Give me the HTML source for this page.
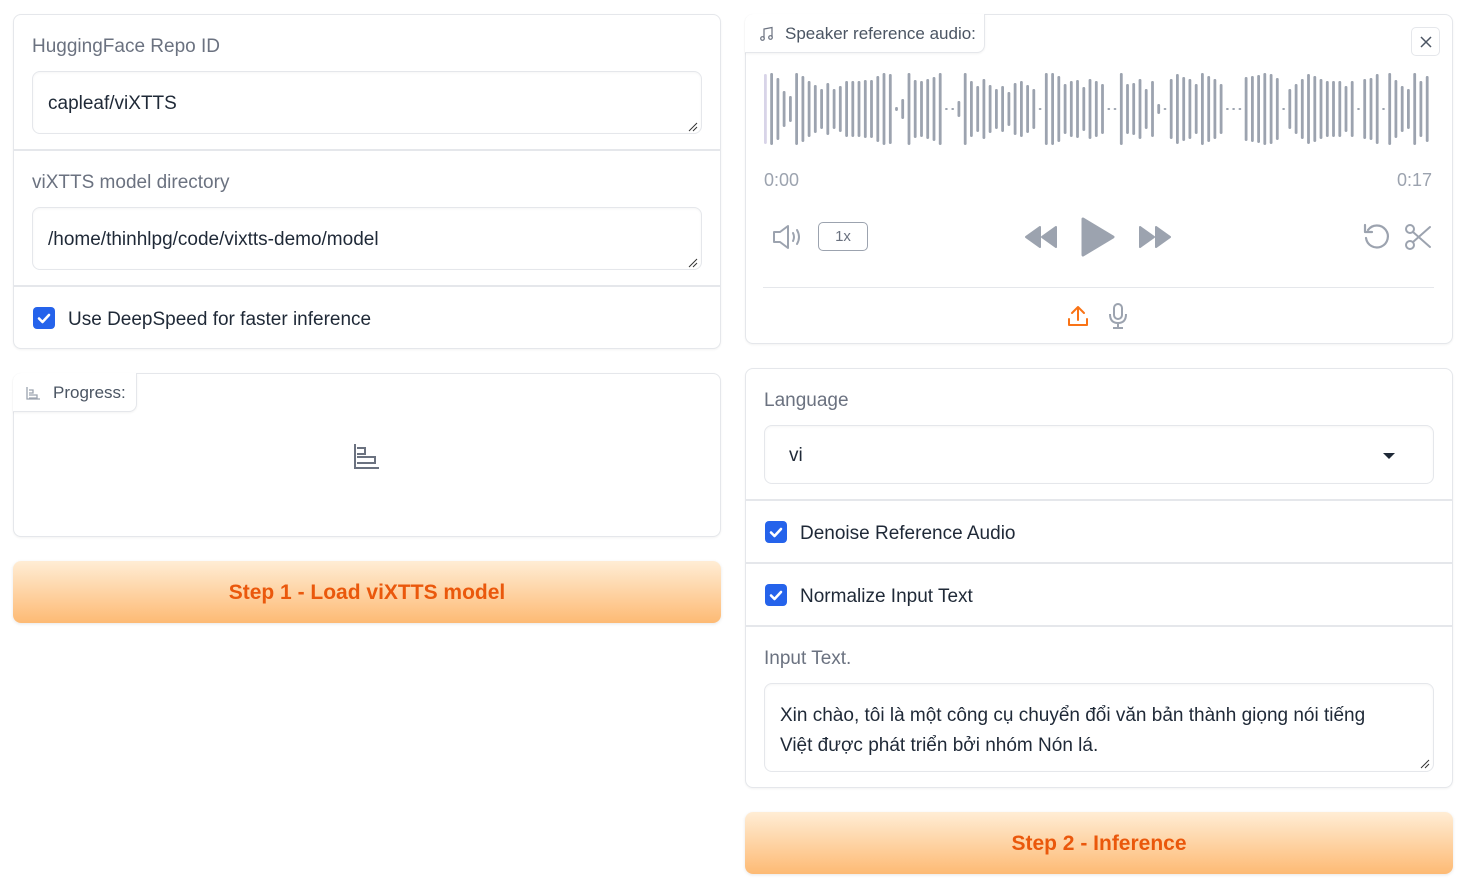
<!DOCTYPE html>
<html><head><meta charset="utf-8"><style>
*{box-sizing:border-box;margin:0;padding:0}
body{width:1467px;height:882px;background:#fff;font-family:"Liberation Sans",sans-serif;position:relative;overflow:hidden;color:#1f2937}
.abs{position:absolute}
.panel{position:absolute;border:1px solid #e5e7eb;border-radius:8px;background:#fff;box-shadow:0 1px 2px rgba(0,0,0,.05)}
.lbl{position:absolute;font-size:19px;color:#6b7280}
.tb{position:absolute;border:1px solid #e5e7eb;border-radius:8px;font-size:19px;color:#1f2937;padding-left:15px;display:flex;align-items:center;box-shadow:inset 0 1px 2px rgba(0,0,0,.04)}
.div{position:absolute;height:2px;background:#e5e7eb}
.cb{position:absolute;width:22px;height:22px;border-radius:4px;background:#2563eb}
.cbt{position:absolute;font-size:19px;color:#1f2937}
.btn{position:absolute;border-radius:8px;background:linear-gradient(to bottom,#ffedd5,#fdba74);color:#ea580c;font-weight:bold;font-size:21px;display:flex;align-items:center;justify-content:center;box-shadow:0 1px 3px rgba(0,0,0,.1)}
.tab{position:absolute;border:1px solid #e5e7eb;border-top:none;border-left:none;border-radius:0 0 8px 0;background:#fff;font-size:16px;color:#4b5563;display:flex;align-items:center;box-shadow:0 1px 2px rgba(0,0,0,.05)}
.grip{position:absolute;width:10px;height:10px}
</style></head><body>
<svg width="0" height="0" style="position:absolute"><defs>
<symbol id="chk" viewBox="0 0 22 22"><path d="M6 11.5l3.5 3.5 6.5-7" fill="none" stroke="#fff" stroke-width="2.6" stroke-linecap="round" stroke-linejoin="round"/></symbol>
<symbol id="grp" viewBox="0 0 10 10"><path d="M9 1L1 9M9 5L5 9" stroke="#333" stroke-width="1"/></symbol>
</defs></svg>

<div class="panel" style="left:13px;top:14px;width:708px;height:335px"></div>
<div class="lbl" style="left:32px;top:36px">HuggingFace Repo ID</div>
<div class="tb" style="left:32px;top:71px;width:670px;height:63px;padding-top:2px">capleaf/viXTTS</div>
<svg class="grip" style="left:688px;top:122px"><use href="#grp"/></svg>
<div class="div" style="left:14px;top:149px;width:706px"></div>
<div class="lbl" style="left:32px;top:172px">viXTTS model directory</div>
<div class="tb" style="left:32px;top:207px;width:670px;height:63px;padding-top:2px">/home/thinhlpg/code/vixtts-demo/model</div>
<svg class="grip" style="left:688px;top:258px"><use href="#grp"/></svg>
<div class="div" style="left:14px;top:285px;width:706px"></div>
<svg class="cb" style="left:33px;top:307px"><use href="#chk"/></svg>
<div class="cbt" style="left:68px;top:309px">Use DeepSpeed for faster inference</div>

<div class="panel" style="left:13px;top:373px;width:708px;height:164px"></div>
<div class="tab" style="left:13px;top:373px;width:124px;height:39px;border-top-left-radius:8px;padding-left:12px;padding-top:2px;font-size:17px">
<svg width="16" height="16" viewBox="0 0 16 16" style="margin-right:12px"><path d="M2 2v12h13M4 5h4v3H4M4 10h8v3H4" fill="none" stroke="#9ca3af" stroke-width="1.3"/></svg>Progress:</div>
<svg class="abs" style="left:353px;top:442px" width="28" height="28" viewBox="0 0 28 28"><path d="M2 2v24h24M4 6h8v6H4M4 15h18v6H4" fill="none" stroke="#6b7280" stroke-width="2"/></svg>

<div class="btn" style="left:13px;top:561px;width:708px;height:62px;padding-top:2px">Step 1 - Load viXTTS model</div>

<!-- audio -->
<div class="panel" style="left:745px;top:14px;width:708px;height:330px"></div>
<div class="tab" style="left:745px;top:14px;width:240px;height:39px;border-top-left-radius:8px;padding-left:14px;padding-top:2px;font-size:17px">
<svg width="16" height="16" viewBox="0 0 16 16" style="margin-right:10px"><path d="M5 12V3l8-1.5V11" fill="none" stroke="#6b7280" stroke-width="1.2"/><circle cx="3.5" cy="12.5" r="1.8" fill="none" stroke="#6b7280" stroke-width="1.2"/><circle cx="11.5" cy="11.5" r="1.8" fill="none" stroke="#6b7280" stroke-width="1.2"/></svg>Speaker reference audio:</div>
<div class="abs" style="left:1411px;top:27px;width:29px;height:29px;border:1px solid #e5e7eb;border-radius:5px;display:flex;align-items:center;justify-content:center">
<svg width="12" height="12"><path d="M1 1l10 10M11 1L1 11" stroke="#4b5563" stroke-width="1.5"/></svg></div>
<svg id="wave" class="abs" style="left:760px;top:68px" width="672" height="82"></svg>
<div class="abs" style="left:764px;top:170px;font-size:18px;color:#9ca3af">0:00</div>
<div class="abs" style="left:1397px;top:170px;font-size:18px;color:#9ca3af">0:17</div>
<svg class="abs" style="left:772px;top:224px" width="32" height="26" viewBox="0 0 32 26"><path d="M2 8h6l8-6v22l-8-6H2z" fill="none" stroke="#9ca3af" stroke-width="2" stroke-linejoin="round"/><path d="M21 9q2 4 0 8M25 6q4 7 0 14" fill="none" stroke="#9ca3af" stroke-width="2" stroke-linecap="round"/></svg>
<div class="abs" style="left:818px;top:222px;width:50px;height:29px;border:1.5px solid #9ca3af;border-radius:5px;font-size:15px;color:#6b7280;display:flex;align-items:center;justify-content:center">1x</div>
<svg class="abs" style="left:1024px;top:225px" width="34" height="24" viewBox="0 0 34 24"><path d="M16 2L2 12l14 10zM32 2L18 12l14 10z" fill="#9ca3af" stroke="#9ca3af" stroke-width="2" stroke-linejoin="round"/></svg>
<svg class="abs" style="left:1080px;top:216px" width="36" height="42" viewBox="0 0 36 42"><path d="M3 3l30 18L3 39z" fill="#9ca3af" stroke="#9ca3af" stroke-width="3" stroke-linejoin="round"/></svg>
<svg class="abs" style="left:1138px;top:225px" width="34" height="24" viewBox="0 0 34 24"><path d="M2 2l14 10L2 22zM18 2l14 10-14 10z" fill="#9ca3af" stroke="#9ca3af" stroke-width="2" stroke-linejoin="round"/></svg>
<svg class="abs" style="left:1362px;top:222px" width="30" height="30" viewBox="0 0 30 30"><path d="M6 8A11 11 0 1 1 4 16" fill="none" stroke="#9ca3af" stroke-width="2.2" stroke-linecap="round"/><path d="M3 3v7h7" fill="none" stroke="#9ca3af" stroke-width="2.2" stroke-linecap="round" stroke-linejoin="round"/></svg>
<svg class="abs" style="left:1404px;top:223px" width="28" height="28" viewBox="0 0 28 28"><circle cx="6" cy="6" r="4" fill="none" stroke="#9ca3af" stroke-width="2"/><circle cx="6" cy="22" r="4" fill="none" stroke="#9ca3af" stroke-width="2"/><path d="M9 9l17 15M9 19L26 4" stroke="#9ca3af" stroke-width="2" stroke-linecap="round"/></svg>
<div class="abs" style="left:763px;top:287px;width:671px;height:1px;background:#e5e7eb"></div>
<svg class="abs" style="left:1066px;top:304px" width="24" height="24" viewBox="0 0 24 24"><path d="M12 16V3M6 9l6-6 6 6M3 15v6h18v-6" fill="none" stroke="#f97316" stroke-width="2" stroke-linecap="round" stroke-linejoin="round"/></svg>
<svg class="abs" style="left:1106px;top:302px" width="24" height="28" viewBox="0 0 24 28"><rect x="8" y="2" width="8" height="15" rx="4" fill="none" stroke="#9ca3af" stroke-width="2"/><path d="M4 12q0 9 8 9t8-9M12 21v5M7 26h10" fill="none" stroke="#9ca3af" stroke-width="2"/></svg>

<!-- right settings -->
<div class="panel" style="left:745px;top:368px;width:708px;height:420px"></div>
<div class="lbl" style="left:764px;top:390px">Language</div>
<div class="tb" style="left:764px;top:425px;width:670px;height:59px;padding-left:24px;padding-top:2px">vi</div>
<svg class="abs" style="left:1382px;top:452px" width="14" height="8"><path d="M1 1h12L7 7z" fill="#1f2937"/></svg>
<div class="div" style="left:746px;top:499px;width:706px"></div>
<svg class="cb" style="left:765px;top:521px"><use href="#chk"/></svg>
<div class="cbt" style="left:800px;top:523px">Denoise Reference Audio</div>
<div class="div" style="left:746px;top:562px;width:706px"></div>
<svg class="cb" style="left:765px;top:584px"><use href="#chk"/></svg>
<div class="cbt" style="left:800px;top:586px">Normalize Input Text</div>
<div class="div" style="left:746px;top:625px;width:706px"></div>
<div class="lbl" style="left:764px;top:648px">Input Text.</div>
<div class="tb" style="left:764px;top:683px;width:670px;height:89px;align-items:flex-start;padding-top:17px;line-height:30px">Xin chào, tôi là một công cụ chuyển đổi văn bản thành giọng nói tiếng<br>Việt được phát triển bởi nhóm Nón lá.</div>
<svg class="grip" style="left:1420px;top:759px"><use href="#grp"/></svg>

<div class="btn" style="left:745px;top:812px;width:708px;height:62px;padding-top:2px">Step 2 - Inference</div>

<script>
var s=document.getElementById('wave'),h='';
var hs=[70,72,62,36,26,72,66,56,48,40,52,40,46,56,56,56,58,58,66,72,70,4,20,72,58,56,60,64,72,2,2,16,72,56,46,60,48,40,46,34,52,56,48,40,2,72,72,66,50,56,58,44,60,56,50,2,2,72,50,52,60,40,56,10,2,60,70,64,60,50,72,66,60,50,2,2,2,64,66,68,72,70,62,2,40,50,60,70,66,60,56,56,56,46,56,2,60,62,70,2,72,58,46,40,72,56,66];
var n=hs.length,w=668/n;
for(var i=0;i<n;i++){var x=4+i*w,hh=hs[i];h+='<rect x="'+x.toFixed(1)+'" y="'+(41-hh/2)+'" width="2.8" height="'+hh+'" rx="1.2" fill="'+(i==0?'#d8d4e8':'#9ca3af')+'"/>';}
s.innerHTML=h;
</script>
</body></html>
